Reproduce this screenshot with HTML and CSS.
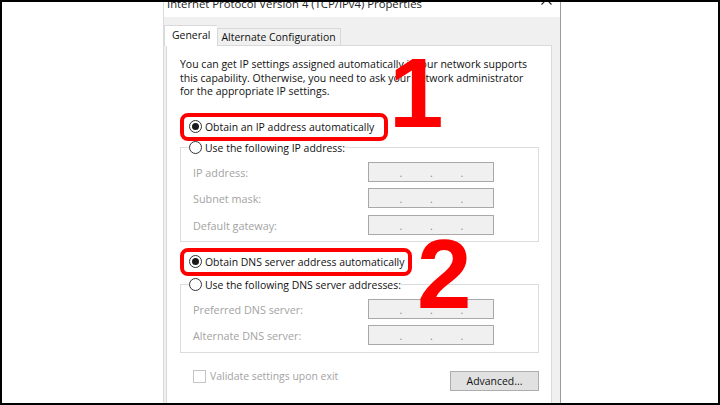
FILE: index.html
```html
<!DOCTYPE html>
<html lang="en">
<head>
<meta charset="utf-8">
<title>TCP/IPv4 Properties</title>
<link rel="stylesheet" href="styles.css">
</head>
<body>
<div class="frame">
  <div class="dialog">
    <div class="titlebar">
      <span class="title">Internet Protocol Version 4 (TCP/IPv4) Properties</span>
      <svg class="close" width="11" height="11" viewBox="0 0 11 11"><path d="M0.5 0.5L10.5 10.5M10.5 0.5L0.5 10.5" stroke="#222" stroke-width="1.1" fill="none"/></svg>
    </div>
    <div class="dbody">
      <div class="tabs">
        <div class="tab active">General</div>
        <div class="tab">Alternate Configuration</div>
      </div>
      <div class="panel">
        <p class="intro">You can get IP settings assigned automatically if your network supports<br>this capability. Otherwise, you need to ask your network administrator<br>for the appropriate IP settings.</p>

        <div class="opt hl first"><span class="radio on"></span><span>Obtain an IP address automatically</span><span class="ring"></span></div>

        <fieldset class="group g1">
          <legend class="opt"><span class="radio"></span><span>Use the following IP address:</span></legend>
          <div class="fields">
            <span class="lbl">IP address:</span>
            <span class="ip"><span class="seg"></span><span class="dot">.</span><span class="seg"></span><span class="dot">.</span><span class="seg"></span><span class="dot">.</span><span class="seg"></span></span>
            <span class="lbl">Subnet mask:</span>
            <span class="ip"><span class="seg"></span><span class="dot">.</span><span class="seg"></span><span class="dot">.</span><span class="seg"></span><span class="dot">.</span><span class="seg"></span></span>
            <span class="lbl">Default gateway:</span>
            <span class="ip"><span class="seg"></span><span class="dot">.</span><span class="seg"></span><span class="dot">.</span><span class="seg"></span><span class="dot">.</span><span class="seg"></span></span>
          </div>
        </fieldset>

        <div class="opt hl second"><span class="radio on"></span><span>Obtain DNS server address automatically</span><span class="ring"></span></div>

        <fieldset class="group g2">
          <legend class="opt"><span class="radio"></span><span>Use the following DNS server addresses:</span></legend>
          <div class="fields">
            <span class="lbl">Preferred DNS server:</span>
            <span class="ip"><span class="seg"></span><span class="dot">.</span><span class="seg"></span><span class="dot">.</span><span class="seg"></span><span class="dot">.</span><span class="seg"></span></span>
            <span class="lbl">Alternate DNS server:</span>
            <span class="ip"><span class="seg"></span><span class="dot">.</span><span class="seg"></span><span class="dot">.</span><span class="seg"></span><span class="dot">.</span><span class="seg"></span></span>
          </div>
        </fieldset>

        <div class="bottom">
          <div class="check"><span class="box"></span><span>Validate settings upon exit</span></div>
          <div class="btn">Advanced...</div>
        </div>

        <span class="num n1">1</span>
        <span class="num n2">2</span>
      </div>
    </div>
  </div>
</div>
</body>
</html>
```

FILE: styles.css
```css
html, body {
  margin: 0;
  padding: 0;
  background: #fff;
}

.frame {
  width: 720px;
  height: 405px;
  box-sizing: border-box;
  border: 2px solid #000;
  background: #fff;
  overflow: hidden;
  display: flex;
  align-items: flex-start;
  padding-left: 161px;
  font-family: "Open Sans", "Noto Sans", sans-serif;
  font-size: 10.45px;
  color: #111;
}

.dialog {
  width: 398px;
  box-sizing: border-box;
  margin-top: -13px;
  border-left: 1px solid #dadada;
  border-right: 1px solid #9a9a9a;
  display: flex;
  flex-direction: column;
}

.titlebar {
  height: 28px;
  background: #fff;
  display: flex;
  align-items: center;
  justify-content: space-between;
  padding: 0 8px 0 3px;
}

.title {
  font-size: 11.3px;
  color: #222;
  margin-top: 1px;
}

.close {
  align-self: flex-start;
  margin-top: 5px;
}

.dbody {
  background: #f0f0f0;
  padding: 8px 8px 0 2px;
}

.tabs {
  display: flex;
  align-items: flex-end;
  position: relative;
  z-index: 2;
}

.tab {
  height: 16px;
  line-height: 16px;
  padding: 0 4px 0 3px;
  border: 1px solid #d9d9d9;
  border-bottom: none;
  background: #f0f0f0;
}

.tab.active {
  height: 20px;
  line-height: 18px;
  padding: 0 7px 0 7px;
  margin-left: -2px;
  margin-bottom: -1px;
  background: #fff;
  border-right: none;
}

.panel {
  position: relative;
  background: #fff;
  border: 1px solid #d9d9d9;
  padding: 12px 12px 40px 13px;
}

.intro {
  margin: 0;
  font-size: 10.5px;
  line-height: 13.5px;
  white-space: nowrap;
}

.opt {
  display: flex;
  align-items: center;
  gap: 3px;
  height: 16px;
  line-height: 16px;
  white-space: nowrap;
}

.opt.hl {
  position: relative;
  width: fit-content;
  margin-left: 9px;
}

.opt.first {
  margin-top: 20px;
}

.opt.second {
  margin-top: 12px;
}

.ring {
  position: absolute;
  left: -9px;
  right: -14px;
  top: -6px;
  bottom: -6px;
  border: 4px solid #f00;
  border-radius: 8px;
  pointer-events: none;
}

.second .ring {
  right: -8px;
}

.radio {
  width: 11px;
  height: 11px;
  border: 1px solid #333;
  border-radius: 50%;
  background: #fff;
  position: relative;
  flex: none;
}

.radio.on::after {
  content: "";
  position: absolute;
  left: 2px;
  top: 2px;
  width: 7px;
  height: 7px;
  border-radius: 50%;
  background: #1a1a1a;
}

.group {
  margin: 5px 0 0 0;
  border: 1px solid #dcdcdc;
  padding: 6px 44px 6px 12px;
  min-width: 0;
}

.group.g2 {
  margin-top: 7px;
  padding-bottom: 7px;
}

.group legend {
  padding: 0;
  margin-left: -4px;
}

.fields {
  display: grid;
  grid-template-columns: 1fr 126px;
  row-gap: 6.5px;
  align-items: center;
}

.lbl {
  color: #a3a3a3;
  font-size: 10.8px;
  padding-top: 1px;
}

.ip {
  box-sizing: border-box;
  height: 20px;
  border: 1px solid #a8a8a8;
  background: #f0f0f0;
  display: flex;
  align-items: flex-end;
  padding: 0 2px 3px 2px;
}

.seg {
  flex: 1;
}

.dot {
  color: #8a8a8a;
  line-height: 10px;
  width: 2px;
  text-align: center;
}

.bottom {
  display: flex;
  justify-content: space-between;
  align-items: flex-start;
  margin-top: 18px;
}

.check {
  display: flex;
  align-items: center;
  gap: 4px;
  margin-left: 13px;
  margin-top: -1px;
  color: #a3a3a3;
  line-height: 13px;
}

.box {
  width: 11px;
  height: 11px;
  border: 1px solid #c4c4c4;
  background: #fff;
}

.btn {
  box-sizing: border-box;
  width: 89px;
  height: 20px;
  line-height: 18px;
  text-align: center;
  background: #e1e1e1;
  border: 1px solid #adadad;
  color: #111;
}

.num {
  position: absolute;
  z-index: 3;
  font-family: "Liberation Sans", Arial, sans-serif;
  font-weight: bold;
  font-size: 98px;
  line-height: 1;
  color: #f00;
}

.n1 {
  left: 222px;
  top: -2px;
}

.n2 {
  left: 250px;
  top: 179px;
}
```
